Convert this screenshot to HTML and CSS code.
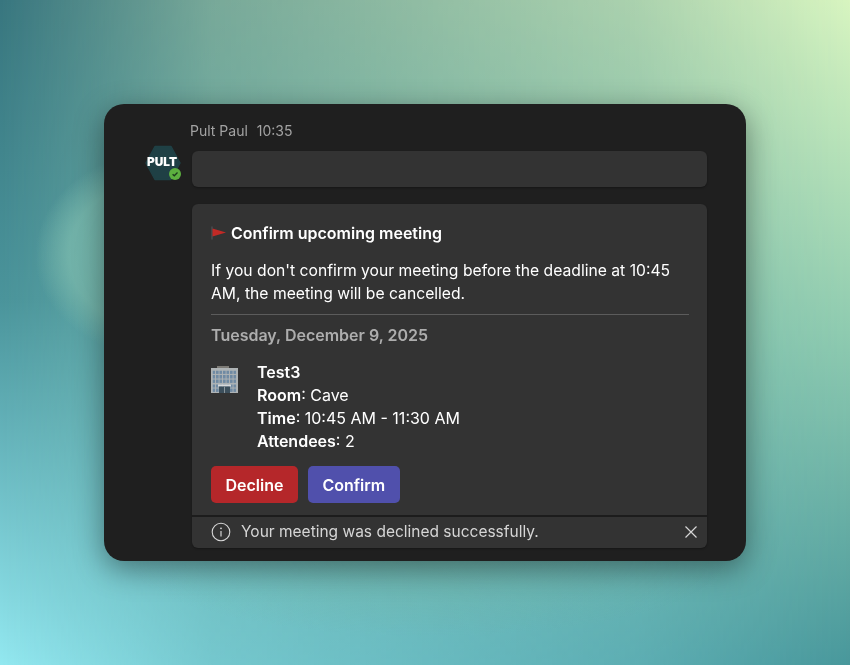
FILE: index.html
```html
<!DOCTYPE html>
<html lang="en">
<head>
    <meta charset="UTF-8">
    <meta name="viewport" content="width=device-width, initial-scale=1.0">
    <title>Confirm upcoming meeting</title>
    <link rel="stylesheet" href="styles.css">
</head>
<body>
    <div class="window">
        <div class="sender"><span>Pult Paul</span><span>10:35</span></div>
        <div class="message-row">
            <div class="avatar">
                <svg class="avatar-hex" width="36" height="36" viewBox="0 0 36 36">
                    <path d="M10 1.5H26L35 18L26 34.5H10L1 18Z" fill="#1f4045" stroke="#1f4045" stroke-width="1.5" stroke-linejoin="round"/>
                </svg>
                <span class="avatar-text">PULT</span>
                <span class="presence">
                    <svg width="12" height="12" viewBox="0 0 12 12">
                        <circle cx="6" cy="6" r="6" fill="#5cb03f"/>
                        <path d="M3.6 6.2L5.3 7.8L8.5 4.5" fill="none" stroke="#1c3a1c" stroke-width="1.3"/>
                    </svg>
                </span>
            </div>
            <div class="bubble"></div>
        </div>
        <div class="card">
            <div class="card-body">
                <div class="card-title">
                    <svg width="16" height="14" viewBox="0 0 16 14">
                        <path d="M1 0.5V13.5" stroke="#55585c" stroke-width="1"/>
                        <path d="M1.500 2.500L15 6.500L1.500 10.500Z" fill="#c22a26"/>
                    </svg>
                    <span>Confirm upcoming meeting</span>
                </div>
                <p class="intro">If you don't confirm your meeting before the deadline at 10:45 AM, the meeting will be cancelled.</p>
                <div class="date">Tuesday, December 9, 2025</div>
                <div class="meeting">
                    <svg class="building" width="27" height="27" viewBox="0 0 27 27">
                        <defs>
                            <pattern id="panes" width="3.500" height="4.500" patternUnits="userSpaceOnUse" x="1.500" y="4.500">
                                <rect width="2.600" height="3.500" fill="#6f8aa3"/>
                            </pattern>
                        </defs>
                        <rect x="6" y="0" width="12" height="3" fill="#7d7b76"/>
                        <rect x="0" y="2" width="27" height="25" fill="#aeb3b5"/>
                        <rect x="1.500" y="4.500" width="24" height="14" fill="url(#panes)"/>
                        <rect x="1.500" y="19" width="24" height="7" fill="url(#panes)"/>
                        <rect x="7" y="18.500" width="13" height="2" fill="#d8dadb"/>
                        <rect x="8" y="20.500" width="11" height="6.500" fill="#3c4f5c"/>
                        <rect x="13" y="20.500" width="1" height="6.500" fill="#8b969c"/>
                    </svg>
                    <div class="details">
                        <div class="details-name">Test3</div>
                        <div><b>Room</b>: Cave</div>
                        <div><b>Time</b>: 10:45 AM - 11:30 AM</div>
                        <div><b>Attendees</b>: 2</div>
                    </div>
                </div>
                <div class="actions">
                    <button class="btn btn-decline">Decline</button>
                    <button class="btn btn-confirm">Confirm</button>
                </div>
            </div>
            <div class="notice">
                <svg width="20" height="20" viewBox="0 0 20 20" fill="none" stroke="#d6d6d6">
                    <circle cx="10" cy="10" r="8.800" stroke-width="1.100"/>
                    <path d="M10 9V14.500" stroke-width="1.200"/>
                    <circle cx="10" cy="6.300" r="0.900" fill="#d6d6d6" stroke="none"/>
                </svg>
                <span class="notice-text">Your meeting was declined successfully.</span>
                <svg class="notice-close" width="14" height="14" viewBox="0 0 14 14" stroke="#d6d6d6" stroke-width="1.200">
                    <path d="M1.500 1.500L12.500 12.500M12.500 1.500L1.500 12.500"/>
                </svg>
            </div>
        </div>
    </div>
</body>
</html>
```

FILE: styles.css
```css
html, body {
    height: 100%;
}
body {
    margin: 0;
    font-family: 'Inter', sans-serif;
    color: #fff;
    display: flex;
    align-items: center;
    justify-content: center;
    background: linear-gradient(to bottom, #38767f 0%, #4a949b 45%, #93e8f0 100%);
}
/* right side of the wallpaper, faded in across the page */
body::before {
    content: '';
    position: fixed;
    inset: 0;
    background: linear-gradient(to bottom, #d8f5c0 0%, #8fcbb0 50%, #48979b 100%);
    -webkit-mask-image: linear-gradient(to right, rgba(0,0,0,0) 0%, rgba(0,0,0,0.4) 25%, rgba(0,0,0,0.72) 75%, #000 100%);
    mask-image: linear-gradient(to right, rgba(0,0,0,0) 0%, rgba(0,0,0,0.4) 25%, rgba(0,0,0,0.72) 75%, #000 100%);
}
/* soft glows that sit behind the window */
body::after {
    content: '';
    position: fixed;
    inset: 0;
    background:
        radial-gradient(ellipse 135px 105px at 170px 255px, rgba(118,182,171,0.95) 0%, rgba(118,182,171,0.85) 75%, rgba(118,182,171,0) 100%),
        radial-gradient(ellipse 300px 75px at 430px 561px, rgba(112,176,160,0.45) 0%, rgba(112,176,160,0) 100%);
}
.window {
    position: relative;
    z-index: 1;
    width: 642px;
    height: 457px;
    box-sizing: border-box;
    background: #1f1f1f;
    border-radius: 20px;
    padding: 18px 39px 13px 41px;
    box-shadow: 0 8px 30px rgba(0,0,0,0.42);
}
.sender {
    display: flex;
    gap: 9px;
    margin-left: 45px;
    height: 17px;
    font-size: 14px;
    line-height: 17px;
    color: #a3a3a3;
}
.message-row {
    display: flex;
    gap: 11px;
    margin-top: 12px;
}
.avatar {
    position: relative;
    width: 36px;
    height: 36px;
    margin-top: -6px;
}
.avatar-hex {
    display: block;
}
.avatar-text {
    position: absolute;
    top: 10px;
    left: 1px;
    width: 32px;
    text-align: center;
    font-size: 11.800px;
    line-height: 14px;
    font-weight: 900;
    color: #fff;
}
.presence {
    position: absolute;
    right: 0;
    bottom: 1px;
    width: 12px;
    height: 12px;
    display: block;
}
.presence svg {
    display: block;
}
.bubble {
    flex: 1;
    height: 36px;
    background: #333;
    border-radius: 6px;
    box-shadow: 0 1px 2px rgba(0,0,0,0.3);
}
.card {
    margin: 17px 0 0 47px;
    background: #333;
    border-radius: 6px;
    box-shadow: 0 1px 2px rgba(0,0,0,0.3);
    overflow: hidden;
}
.card-body {
    padding: 18px 18px 12px 19px;
}
.card-title {
    display: flex;
    align-items: center;
    gap: 4px;
    font-size: 16px;
    line-height: 22px;
    font-weight: 600;
}
.intro {
    margin: 15px 0 0;
    padding-bottom: 9px;
    border-bottom: 1px solid #5c5c5c;
    font-size: 15.700px;
    line-height: 23px;
}
.date {
    margin-top: 9px;
    font-size: 16px;
    line-height: 22px;
    font-weight: 600;
    color: #adadad;
}
.meeting {
    display: flex;
    gap: 19px;
    margin-top: 15px;
}
.building {
    flex-shrink: 0;
    margin-top: 5px;
}
.details {
    font-size: 16px;
    line-height: 23px;
}
.details-name, .details b {
    font-weight: 600;
}
.actions {
    display: flex;
    gap: 10px;
    margin-top: 13px;
}
.btn {
    height: 37px;
    padding: 0 14.500px;
    border: none;
    border-radius: 5px;
    color: #fff;
    font-family: inherit;
    font-size: 16px;
    font-weight: 600;
}
.btn-decline {
    background: #b5272a;
}
.btn-confirm {
    background: #5050ac;
}
.notice {
    display: flex;
    align-items: center;
    box-sizing: border-box;
    height: 33px;
    padding: 0 9px 2px 19px;
    border-top: 2px solid #1c1c1c;
    color: #d6d6d6;
}
.notice-text {
    flex: 1;
    margin-left: 10px;
    font-size: 15.500px;
}
```
